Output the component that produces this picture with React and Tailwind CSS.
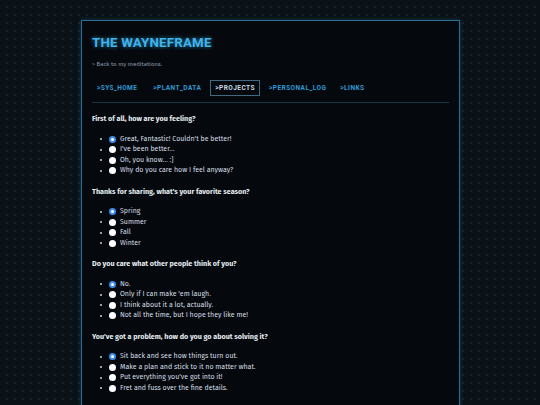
import React from "react";

const questions = [
  {
    q: "First of all, how are you feeling?",
    opts: [
      "Great, Fantastic! Couldn't be better!",
      "I've been better...",
      "Oh, you know... :]",
      "Why do you care how I feel anyway?",
    ],
  },
  {
    q: "Thanks for sharing, what's your favorite season?",
    opts: ["Spring", "Summer", "Fall", "Winter"],
  },
  {
    q: "Do you care what other people think of you?",
    opts: [
      "No.",
      "Only if I can make 'em laugh.",
      "I think about it a lot, actually.",
      "Not all the time, but I hope they like me!",
    ],
  },
  {
    q: "You've got a problem, how do you go about solving it?",
    opts: [
      "Sit back and see how things turn out.",
      "Make a plan and stick to it no matter what.",
      "Put everything you've got into it!",
      "Fret and fuss over the fine details.",
    ],
  },
  {
    q: "I think I can safely tell you anything — how do you spend your free time?",
    opts: ["Reading", "Gaming", "Walking", "Sleeping"],
  },
];

function Radio({ checked }) {
  return checked ? (
    <span className="inline-block w-[7px] h-[7px] rounded-full border-[2px] border-[#3b8ff0] bg-white shrink-0" />
  ) : (
    <span className="inline-block w-[7px] h-[7px] rounded-full bg-white shrink-0" />
  );
}

export default function App() {
  return (
    <div
      className="w-[540px] h-[405px] overflow-hidden bg-[#0a1117] bg-[radial-gradient(circle,#16222a_0.8px,transparent_1px)] bg-[length:8px_8px] bg-[position:3px_3px] pt-[20px] pl-[81px]"
      style={{ fontFamily: '"Fira Sans","Open Sans","Noto Sans",sans-serif' }}
    >
      <div className="w-[379px] h-[420px] bg-[#05090d] border border-[#2c6e93] shadow-[0_0_4px_rgba(44,110,147,0.5)] px-[10px] pt-[14px]">
        <h1
          className="text-[13.3px] leading-[16px] font-bold text-[#3fb3ec] tracking-[0.2px] [text-shadow:0_0_4px_rgba(63,179,236,0.7)]"
          style={{ fontFamily: '"Roboto","Liberation Sans",sans-serif' }}
        >
          THE WAYNEFRAME
        </h1>
        <div className="mt-[9px] text-[6px] leading-[8px] text-[#8a9aa6]">
          &gt; Back to my meditations.
        </div>
        <nav
          className="mt-[12px] flex items-center gap-[4px] border-b border-[#1b3442] pb-[6px]"
          style={{ fontFamily: '"Roboto","Liberation Sans",sans-serif' }}
        >
          <span className="text-[6.5px] leading-[8px] font-bold tracking-[0.4px] text-[#2f9ad6] px-[5px] py-[3px] mr-[2px]">
            &gt;SYS_HOME
          </span>
          <span className="text-[6.5px] leading-[8px] font-bold tracking-[0.45px] text-[#2f9ad6] px-[5px] py-[3px]">
            &gt;PLANT_DATA
          </span>
          <span className="text-[6.5px] leading-[8px] font-bold tracking-[0.45px] text-[#c9dbe6] border border-[#3d6a80] px-[4px] py-[3px]">
            &gt;PROJECTS
          </span>
          <span className="text-[6.5px] leading-[8px] font-bold tracking-[0.45px] text-[#2f9ad6] px-[5px] py-[3px]">
            &gt;PERSONAL_LOG
          </span>
          <span className="text-[6.5px] leading-[8px] font-bold tracking-[0.45px] text-[#2f9ad6] px-[5px] py-[3px]">
            &gt;LINKS
          </span>
        </nav>
        <div className="mt-[11px] flex flex-col">
          {questions.map((b, i) => (
            <div key={i} className="mb-[12px]">
              <div className="text-[7.2px] leading-[9px] font-bold text-[#e4ebf0]">{b.q}</div>
              <ul className="mt-[12px] flex flex-col gap-[2.5px] pl-[8px]">
                {b.opts.map((o, j) => (
                  <li key={j} className="flex items-center h-[8px] text-[7px] text-[#d5dde3]">
                    <span className="w-[2px] h-[2px] rounded-full bg-[#c7d0d6] mr-[7px]" />
                    <Radio checked={j === 0} />
                    <span className="ml-[4px]">{o}</span>
                  </li>
                ))}
              </ul>
            </div>
          ))}
        </div>
      </div>
    </div>
  );
}
